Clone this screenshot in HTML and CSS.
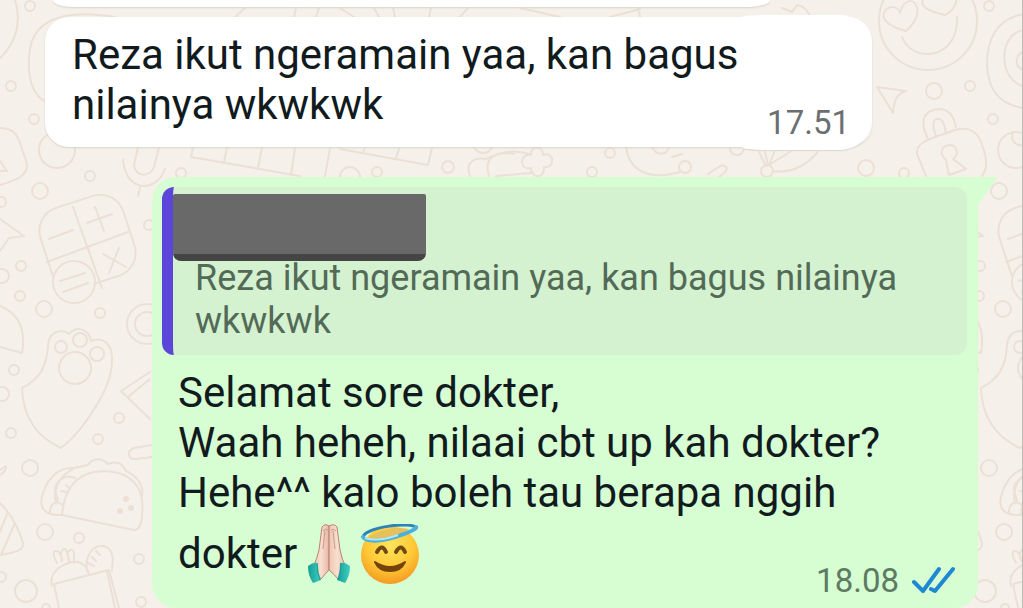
FILE: index.html
```html
<!DOCTYPE html>
<html lang="id">
<head>
    <meta charset="UTF-8">
    <meta name="viewport" content="width=device-width, initial-scale=1">
    <title>Chat</title>
    <link rel="stylesheet" href="styles.css">
</head>
<body>

    <!-- wallpaper -->
    <svg class="wallpaper" aria-hidden="true">
        <defs>
            <g id="tile">
                <circle cx="30" cy="6" r="5"/><circle cx="11" cy="86" r="5"/><circle cx="34" cy="119" r="5"/>
                <circle cx="57" cy="150" r="18"/><circle cx="90" cy="176" r="5"/><circle cx="40" cy="191" r="8"/>
                <circle cx="1" cy="202" r="5"/><circle cx="21" cy="266" r="5"/><circle cx="2" cy="276" r="7"/>
                <circle cx="20" cy="296" r="5"/><circle cx="44" cy="309" r="8"/><circle cx="100" cy="313" r="5"/>
                <circle cx="149" cy="225" r="5"/><circle cx="14" cy="370" r="5"/><circle cx="2" cy="394" r="7"/>
                <circle cx="11" cy="433" r="5"/><circle cx="30" cy="468" r="8"/><circle cx="119" cy="418" r="5"/>
                <circle cx="98" cy="439" r="5"/><circle cx="45" cy="532" r="8"/><circle cx="79" cy="538" r="5"/>
                <circle cx="139" cy="559" r="5"/><circle cx="26" cy="591" r="11"/><circle cx="1" cy="577" r="5"/>
                <circle cx="141" cy="602" r="5"/><circle cx="46" cy="608" r="4"/>
                <!-- calculator -->
                <rect x="44" y="200" width="87" height="84" rx="24" transform="rotate(-18 87 242)"/>
                <path d="M73 207l29 81M47 262l81-30M49 239l24-9M87 223l25-9M95 207l9 24M103 254l23 13M119 248l-10 25"/>
                <circle class="filled" cx="74" cy="282" r="21"/>
                <path d="M60 281l25-8M63 292l25-9"/>
                <path d="M0 219l24 17-15 2-9 13M0 306c20 8 26 24 22 47L0 347"/>
                <circle cx="147" cy="324" r="20"/><circle cx="147" cy="324" r="12"/>
                <!-- paw -->
                <path d="M22 388c18-9 25-22 26-43 1-14 14-17 21-11 8-9 20-5 22 7 12-5 20 3 21 15 1 14-3 26-9 38-12 22-26 42-42 54-24-11-38-30-39-60z"/>
                <circle cx="61" cy="347" r="6"/><circle cx="80" cy="340" r="7"/><circle cx="97" cy="354" r="7"/><circle cx="75" cy="368" r="16"/>
                <path d="M150 372l-29 19 29 28M128 397l22-18M152 445l-18 3c-8 3-6 12 2 11l16-2"/>
                <!-- taco -->
                <path d="M62 515l72 15c8 0 9-14 8-30-4-25-26-31-48-28-20 4-30 20-32 43zM62 515c-21 1-23-10-19-22 6-18 18-26 31-25l14-3c5-8 14-7 20-1 9-4 15 0 18 7 11 5 18 14 16 25M73 469c-16 8-20 24-17 33M75 478c-9-4-20 2-20 12l3 11M50 512c0-9 7-12 13-7M66 485l3 3M61 491l5 1"/>
                <g class="dots"><circle cx="126" cy="499" r="2"/><circle cx="120" cy="511" r="2"/><circle cx="131" cy="508" r="2"/></g>
                <path d="M0 503c12 12 19 26 23 40 1 9-12 10-23 12M7 514L0 532M15 523L1 555M0 475c8-5 7-12 3-7l-3 2"/>
                <!-- groceries -->
                <path d="M54 584l55-14 10 38M54 584l5 24M107 571l8 37M52 586c-3-11 5-20 20-24 10-2 16 6 17 13M57 563c-5-9-4-13 0-12 3 0 5 8 5 10M62 560c-4-9 4-15 5-8l2 9M69 559c-4-9 4-12 5-6v10M87 571c-3-20 12-31 22-22 6 6 3 15 3 22M92 557l4 4M88 563l6 3M96 551l4 4"/>
            </g>
        </defs>
        <g class="doodle">
            <use href="#tile"/>
            <use href="#tile" x="959"/>
            <path d="M15 0c7 22 1 43-15 58M115 17C55 7 29 24 29 60c-1 23 6 36 17 42"/>
            <path d="M0 128c21 0 19 17 26 32 5 16-12 21-26 25M0 161l7 10H0"/>
            <path d="M138 147l-4 18c2 13 16 12 20 2l5-20M123 160c3 34 34 32 42 9M140 187l-2 9"/>
            <circle cx="181" cy="173" r="5"/>
            <path d="M193 147l-2 10 109 19M227 147l-3 15M262 147l-4 21M295 148l-4 27M330 148l-5 28M340 149l88 16 4-17M365 147l-2 6M399 149l-3 9"/>
            <path d="M235 17l10-9M294 17l2-9M316 17l3-9M340 8l14 9M374 8l5 9M393 8l2 9M429 17l2-9M460 17l8-9M520 8l40 9M610 17l30-8M640 17l-2-9"/>
            <circle cx="448" cy="167" r="6"/><circle cx="377" cy="172" r="5"/><circle cx="350" cy="177" r="10"/>
            <circle cx="610" cy="153" r="5"/><circle cx="592" cy="172" r="5"/>
            <path d="M470 176c-5-13 3-19 16-17 22-10 31-8 43-5M489 176c-6-20 8-25 25-22M496 176l45-4M474 148c6 7 14 6 18 0"/>
            <path class="filled" d="M531 155c-2-9 13-10 12 0 11-5 13 14 1 12 1 12-13 12-13 1-12 3-12-15 0-13z"/>
            <path d="M626 147c4 26 24 33 54 25M652 147c5 10 15 8 17 0M672 157l10-3"/>
            <circle cx="685" cy="167" r="6"/><circle cx="737" cy="148" r="7"/><circle cx="767" cy="171" r="6"/>
            <path d="M708 174l12-8c7-2 9 4 3 8l-4 3M757 148l9 18M764 148l4 17M775 150l-6 15 24-15M773 171c20 3 37-8 46-21M782 8l10 4 5-7c7 1 10 5 13 11"/>
            <circle cx="866" cy="168" r="8"/><circle cx="904" cy="173" r="5"/><circle cx="934" cy="91" r="8"/>
            <!-- smiley -->
            <circle cx="928" cy="21" r="49"/>
            <path d="M906 31c-19-5-26-13-21-20 5-7 14-4 15 2 3-14 14-15 17-6 2 8-3 17-11 24zM945 15c-18-4-25-9-22-16l4-7M945 15c9-5 13-12 11-21M902 37c10 27 57 23 55-20"/>
            <path d="M877 87l29 4c-10 3-12 10-13 22z"/>
            <path d="M1023 14c-25 5-36 23-36 51 1 29 17 40 36 43M1023 30c-25 5-25 49 0 56M1023 52c-9 4-8 15 0 18"/>
            <!-- lock -->
            <path d="M926 176l-9-22c-1-12 10-14 38-24 15-4 24 3 27 15 6 16 5 24 0 31M928 139c-10-20-3-29 11-30 11 0 15 8 17 18M936 136c-5-13-2-18 3-17 4 0 6 8 7 14"/>
            <path d="M946 160c-8-7-4-14 3-15 8 0 11 9 4 14l13 10-17 6z"/>
            <path d="M1013 132c-3 9 2 13 10 14"/>
        </g>
    </svg>

    <main class="chat">
        <div class="bubble previous"></div>

        <article class="bubble incoming">
            <p class="message">Reza ikut ngeramain yaa, kan bagus nilainya wkwkwk</p>
            <time class="time" datetime="17:51">17.51</time>
        </article>

        <article class="bubble outgoing">
            <svg class="tail" width="20" height="28" viewBox="0 0 20 28" aria-hidden="true">
                <path d="M0 0h16q4 0 2 3L0 28z" fill="#d7fdd3"/>
            </svg>
            <blockquote class="quote">
                <div class="censor"></div>
                <p class="quote-text">Reza ikut ngeramain yaa, kan bagus nilainya wkwkwk</p>
            </blockquote>
            <p class="message">Selamat sore dokter,<br>
                Waah heheh, nilaai cbt up kah dokter?<br>
                Hehe^^ kalo boleh tau berapa nggih dokter
                <span class="emojis"><svg class="emoji" width="46" height="60" viewBox="0 0 46 60" role="img" aria-label="tangan berdoa">
                    <defs>
                        <linearGradient id="skin" x1="0" x2="1">
                            <stop offset="0" stop-color="#efc5b0"/>
                            <stop offset=".5" stop-color="#f9dfd0"/>
                            <stop offset="1" stop-color="#e8b7a4"/>
                        </linearGradient>
                        <linearGradient id="sleeve" x1="0" x2="1">
                            <stop offset="0" stop-color="#149d97"/>
                            <stop offset="1" stop-color="#3fcfc0"/>
                        </linearGradient>
                    </defs>
                    <path d="M16 3q3-4 7-1v44q-4 4-8 9L7 43q4-8 6-17z" fill="url(#skin)" stroke="#ba8376"/>
                    <path d="M23 2q5-3 8 1l3 23q2 10 6 17l-8 12q-4-5-9-9z" fill="url(#skin)" stroke="#ba8376"/>
                    <path d="M23 4v43M19 7l-2 18M27 7l2 18M17 7q2-3 5-1M25 6q3-2 5 1" fill="none" stroke="#c99a8c"/>
                    <path d="M2 42q5-4 10-3 0 10 3 17l-8 3Q2 52 2 42z" fill="url(#sleeve)"/>
                    <path d="M34 39q5-1 10 3 0 10-5 17l-8-3q3-7 3-17z" fill="url(#sleeve)"/>
                    <path d="M11 40q0 9 3 16M35 40q0 9-3 16" fill="none" stroke="#2a9a94"/>
                </svg>
                <svg class="emoji" width="60" height="60" viewBox="0 0 60 60" role="img" aria-label="wajah senyum dengan lingkaran halo">
                    <defs>
                        <radialGradient id="face" cx=".5" cy=".32" r=".68">
                            <stop offset="0" stop-color="#ffe45d"/>
                            <stop offset=".6" stop-color="#ffc936"/>
                            <stop offset="1" stop-color="#f49a23"/>
                        </radialGradient>
                    </defs>
                    <circle cx="30" cy="31" r="29" fill="url(#face)"/>
                    <path d="M3 13C5 3 53-3 56 4" fill="none" stroke="#2d83b5" stroke-width="3"/>
                    <path d="M9 13Q28 1 49 5l-8 6-25 5z" fill="#e5c05c"/>
                    <path d="M17 28q5-9 9 0M36 28q5-9 9 0" fill="none" stroke="#704a13" stroke-width="4" stroke-linecap="round"/>
                    <path d="M15 38q15 10 30 0-4 9-15 9T15 38z" fill="#74430c" stroke="#74430c" stroke-width="2" stroke-linejoin="round"/>
                    <path d="M3 13c4 6 23 4 38-2C53 7 57 4 56 3" fill="none" stroke="#4bb1dc" stroke-width="4" stroke-linecap="round"/>
                    <path d="M5 14c9 3 22 1 33-3" fill="none" stroke="#b2e9ee" stroke-width="2"/>
                </svg></span>
                <span class="status">
                    <time class="time" datetime="18:08">18.08</time>
                    <svg class="ticks" width="44" height="30" viewBox="0 0 44 30" role="img" aria-label="dibaca">
                        <path d="M3 16l9 9L28 3M20 23l4 2L42 3" fill="none" stroke="#1e88d2" stroke-width="4" stroke-linecap="round" stroke-linejoin="round"/>
                    </svg>
                </span>
            </p>
        </article>
    </main>

</body>
</html>
```

FILE: styles.css
```css
* {
    box-sizing: border-box;
}

body {
    margin: 0;
    position: relative;
    overflow: hidden;
    background-color: #f5f1ea;
    border-right: 1px solid #bebdb5;
    font-family: Roboto, "Noto Sans", sans-serif;
    color: #111b1e;
}

p,
blockquote {
    margin: 0;
}

/* background drawings */
.wallpaper {
    position: absolute;
    top: 0;
    left: 0;
    width: 100%;
    height: 100%;
    overflow: hidden;
}

.doodle {
    fill: none;
    stroke: #ebe0d6;
    stroke-width: 2;
    stroke-linecap: round;
    stroke-linejoin: round;
}

.filled {
    fill: #f5f1ea;
}

.dots {
    fill: #ebe0d6;
}

.chat {
    position: relative;
    display: flex;
    flex-direction: column;
    padding: 0 44px 0 45px;
}

.bubble {
    position: relative;
    border-radius: 24px;
}

.previous {
    height: 7px;
    margin: 0 208px 10px 8px;
    border-radius: 0 0 24px 20px / 0 0 7px 7px;
    background-color: #fff;
    box-shadow: 0 1px 2px #d8d3cb;
}

.incoming {
    height: 130px;
    margin-right: 106px;
    padding: 13px 24px 8px 27px;
    background-color: #fff;
    box-shadow: 0 1px 2px #d8d3cb;
}

/* the right end is a bit taller than the rest */
.incoming::after {
    content: "";
    position: absolute;
    top: -2px;
    right: 0;
    bottom: -3px;
    width: 130px;
    background-color: #fff;
    border-radius: 24px 32px 32px 24px / 2px 32px 32px 3px;
    box-shadow: 0 2px 1px -1px #dedad2;
}

.message {
    font-size: 42px;
    line-height: 50px;
}

.incoming .message {
    position: relative;
    z-index: 1;
}

.time {
    font-size: 33px;
    line-height: 38px;
    color: #6b6f71;
}

.incoming .time {
    position: absolute;
    right: 22px;
    bottom: 5px;
    z-index: 1;
}

.outgoing {
    margin: 30px 0 0 107px;
    padding: 10px 11px 0 10px;
    background-color: #d7fdd3;
    border-top-right-radius: 0;
}

.tail {
    position: absolute;
    top: 0;
    left: 100%;
}

.quote {
    padding: 7px 32px 12px 0;
    border-left: 11px solid #5c46d9;
    border-radius: 12px;
    background-color: #d4f2cf;
}

.censor {
    width: 253px;
    height: 67px;
    margin-bottom: -4px;
    background: linear-gradient(#69696a 60px, #444445 60px);
    border-radius: 2px 2px 8px 8px;
}

.quote-text {
    padding-left: 22px;
    font-size: 36px;
    line-height: 43px;
    color: #536a58;
}

.outgoing .message {
    display: flow-root;
    padding: 13px 12px 0 16px;
}

.emojis {
    white-space: nowrap;
}

.emoji {
    margin-top: 6px;
    margin-left: -2px;
    vertical-align: -16px;
}

.status {
    float: right;
    display: flex;
    align-items: center;
    gap: 12px;
    margin-top: 44px;
    padding-bottom: 8px;
}

.outgoing .time {
    color: #5c7b62;
}
```
